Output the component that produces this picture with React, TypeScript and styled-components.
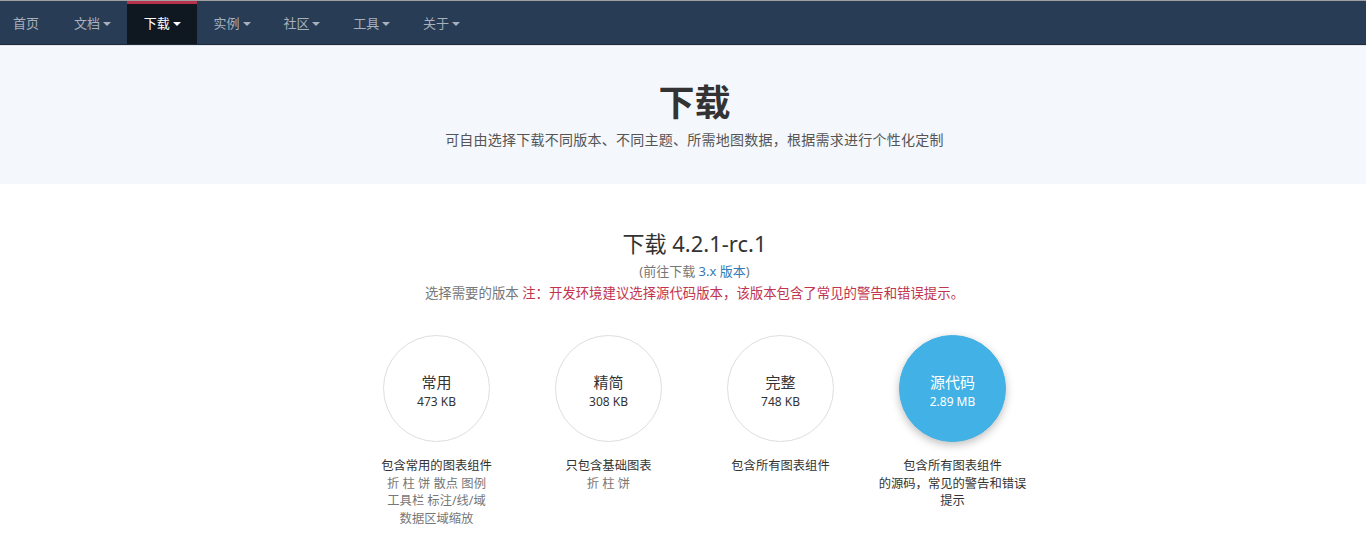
import React from "react";
import styled, { createGlobalStyle } from "styled-components";

const Global = createGlobalStyle`
  html, body { margin: 0; padding: 0; background: #fff; }
  body {
    font-family: "Noto Sans", "Noto Sans CJK SC", sans-serif;
    color: #333;
  }
  * { box-sizing: border-box; }
`;

const Page = styled.div`
  width: 1366px;
  border-top: 1px solid #a0a0a0;
`;

const NavBar = styled.nav`
  height: 44px;
  background: #293c55;
  border-bottom: 1px solid #1c2a3c;
  box-shadow: 0 1px 0 #e3e7ec;
  display: flex;
`;

const NavList = styled.ul`
  list-style: none;
  margin: 0;
  padding: 0;
  display: flex;
`;

const NavItem = styled.li<{ $active?: boolean }>`
  height: 43px;
  padding: 0 16.4px 3px;
  display: flex;
  align-items: center;
  gap: 3px;
  font-size: 13px;
  color: ${(p) => (p.$active ? "#fff" : "#a7b0bc")};
  background: ${(p) => (p.$active ? "#0f1720" : "transparent")};
  border-top: 3px solid ${(p) => (p.$active ? "#b9324b" : "transparent")};
  cursor: pointer;

  &:first-child {
    padding-left: 13px;
    padding-right: 18.6px;
  }
`;

const Caret = styled.span`
  display: inline-block;
  width: 0;
  height: 0;
  border-left: 4px solid transparent;
  border-right: 4px solid transparent;
  border-top: 4px solid currentColor;
  margin-top: 2px;
`;

const Hero = styled.section`
  margin-top: 1px;
  background: #f4f7fb;
  padding: 37px 0 34px 23px;
  text-align: center;
`;

const HeroTitle = styled.h1`
  margin: 0;
  font-size: 36px;
  line-height: 40px;
  font-weight: 700;
  color: #333;
`;

const HeroSub = styled.p`
  margin: 7px 0 0;
  font-size: 14px;
  letter-spacing: 0.25px;
  line-height: 20px;
  color: #555;
`;

const Main = styled.section`
  padding: 44px 0 0 23px;
  text-align: center;
`;

const VersionTitle = styled.h2`
  margin: 0;
  font-size: 22px;
  line-height: 30px;
  font-weight: 400;
  color: #333;
`;

const OldLink = styled.p`
  margin: 3px 0 0;
  font-size: 13px;
  line-height: 20px;
  color: #777;
`;

const Link = styled.a`
  color: #337ab7;
  text-decoration: none;
`;

const Note = styled.p`
  margin: 2px 0 0;
  font-size: 13.4px;
  line-height: 20px;
  color: #777;
`;

const Danger = styled.span`
  color: #c1344f;
`;

const Options = styled.div`
  margin: 32px auto 0;
  display: grid;
  grid-template-columns: repeat(4, 172px);
  justify-content: center;
`;

const Option = styled.div`
  display: flex;
  flex-direction: column;
  align-items: center;
`;

const Circle = styled.div<{ $active?: boolean }>`
  width: 107px;
  height: 107px;
  border-radius: 50%;
  display: flex;
  flex-direction: column;
  align-items: center;
  justify-content: center;
  padding-top: 6px;
  border: 1px solid ${(p) => (p.$active ? "#42b1e5" : "#dedede")};
  background: ${(p) => (p.$active ? "#42b1e5" : "#fff")};
  color: ${(p) => (p.$active ? "#fff" : "#333")};
  box-shadow: ${(p) => (p.$active ? "0 3px 9px rgba(0,0,0,0.25)" : "none")};
  cursor: pointer;
`;

const CircleName = styled.div`
  font-size: 15px;
  line-height: 20px;
`;

const CircleSize = styled.div`
  font-size: 12px;
  line-height: 20px;
`;

const Desc = styled.div`
  margin-top: 15px;
  width: 154px;
  font-size: 12.3px;
  line-height: 17.7px;
  color: #777;
`;

const DescMain = styled.div`
  color: #333;
`;

const options = [
  { name: "常用", size: "473 KB", main: "包含常用的图表组件", sub: ["折 柱 饼 散点 图例", "工具栏 标注/线/域", "数据区域缩放"] },
  { name: "精简", size: "308 KB", main: "只包含基础图表", sub: ["折 柱 饼"] },
  { name: "完整", size: "748 KB", main: "包含所有图表组件", sub: [] },
  { name: "源代码", size: "2.89 MB", main: "包含所有图表组件", sub: [], active: true },
];

const navItems = [
  { label: "首页", caret: false },
  { label: "文档", caret: true },
  { label: "下载", caret: true, active: true },
  { label: "实例", caret: true },
  { label: "社区", caret: true },
  { label: "工具", caret: true },
  { label: "关于", caret: true },
];

export default function App() {
  return (
    <Page>
      <Global />
      <NavBar>
        <NavList>
          {navItems.map((n) => (
            <NavItem key={n.label} $active={n.active}>
              {n.label}
              {n.caret && <Caret />}
            </NavItem>
          ))}
        </NavList>
      </NavBar>
      <Hero>
        <HeroTitle>下载</HeroTitle>
        <HeroSub>可自由选择下载不同版本、不同主题、所需地图数据，根据需求进行个性化定制</HeroSub>
      </Hero>
      <Main>
        <VersionTitle>下载 4.2.1-rc.1</VersionTitle>
        <OldLink>
          (前往下载 <Link href="#">3.x 版本</Link>)
        </OldLink>
        <Note>
          选择需要的版本 <Danger>注：开发环境建议选择源代码版本，该版本包含了常见的警告和错误提示。</Danger>
        </Note>
        <Options>
          {options.map((o) => (
            <Option key={o.name}>
              <Circle $active={o.active}>
                <CircleName>{o.name}</CircleName>
                <CircleSize>{o.size}</CircleSize>
              </Circle>
              <Desc>
                {o.active ? (
                  <DescMain>
                    包含所有图表组件
                    <br />
                    的源码，常见的警告和错误提示
                  </DescMain>
                ) : (
                  <>
                    <DescMain>{o.main}</DescMain>
                    {o.sub.map((s) => (
                      <div key={s}>{s}</div>
                    ))}
                  </>
                )}
              </Desc>
            </Option>
          ))}
        </Options>
      </Main>
    </Page>
  );
}
